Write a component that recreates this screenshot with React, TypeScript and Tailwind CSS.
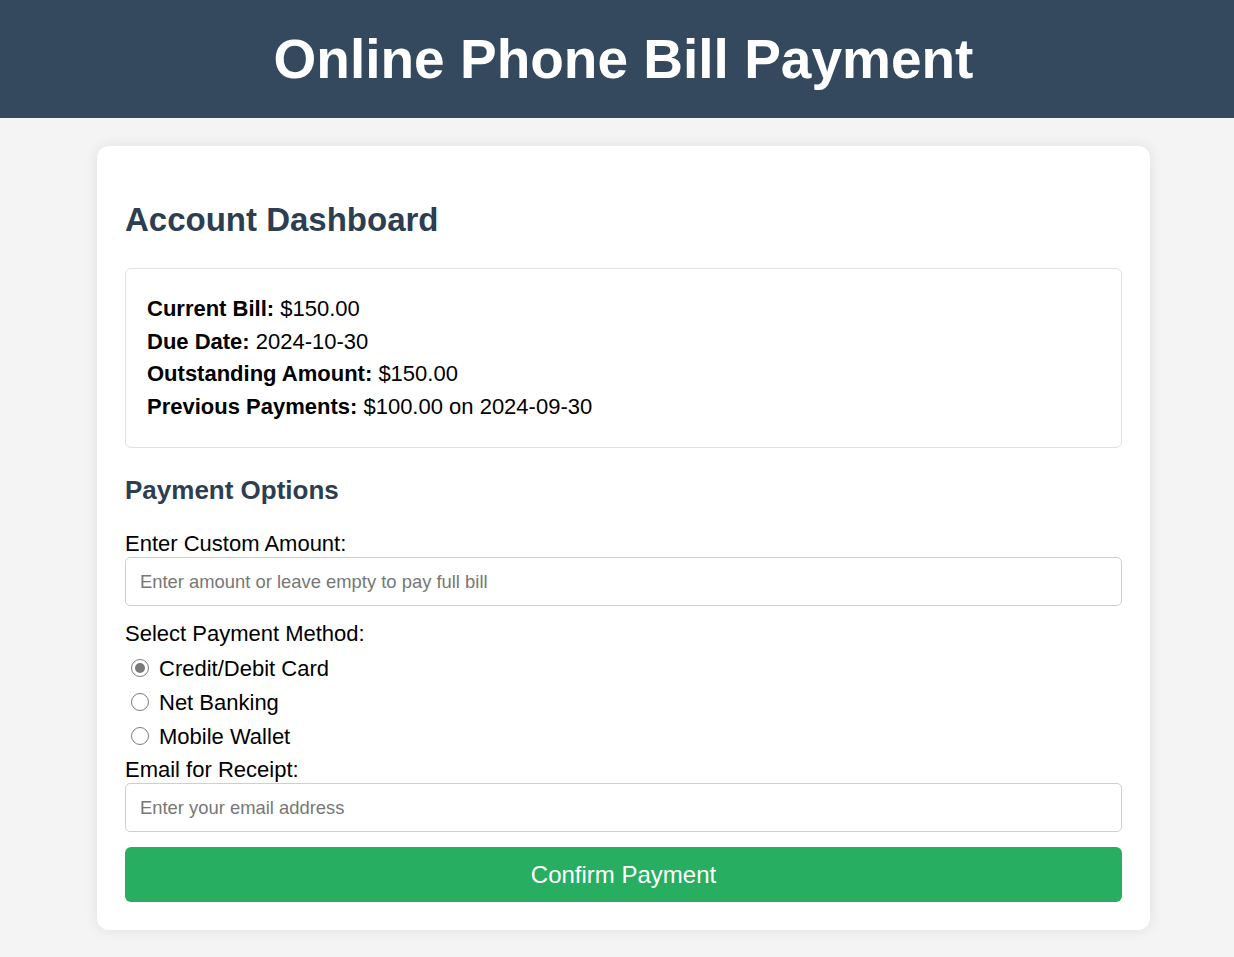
import React from "react";

const methods = ["Credit/Debit Card", "Net Banking", "Mobile Wallet"];

const Radio = ({ checked }: { checked: boolean }) => (
  <span className="flex h-[18px] w-[18px] items-center justify-center rounded-full border border-[#7d7d7d] bg-white">
    {checked && <span className="h-[10px] w-[10px] rounded-full bg-[#7a7a7a]" />}
  </span>
);

export default function App() {
  const [method, setMethod] = React.useState(0);

  return (
    <div className="min-h-[957px] bg-[#f4f4f4] font-['Liberation_Sans',Arial,sans-serif] text-black">
      {/* Header */}
      <header className="flex h-[118px] items-center justify-center bg-[#34495e] pl-[13px]">
        <h1 className="text-[55px] font-bold leading-none text-white">Online Phone Bill Payment</h1>
      </header>

      <div className="pl-[13px]">
        {/* Card */}
        <div className="mx-auto mt-[28px] w-[1053px] rounded-[12px] bg-white px-[28px] pt-[28px] pb-[28px] shadow-[0_0_14px_rgba(0,0,0,0.09)]">
          <h2 className="mt-[26px] text-[33px] font-bold leading-[40px] text-[#2c3e50]">Account Dashboard</h2>

          <div className="mt-[28px] rounded-[6px] border border-[#e2e2e2] px-[21px] py-[24px] text-[22px] leading-[32.5px]">
            <p><b>Current Bill:</b> $150.00</p>
            <p><b>Due Date:</b> 2024-10-30</p>
            <p><b>Outstanding Amount:</b> $150.00</p>
            <p><b>Previous Payments:</b> $100.00 on 2024-09-30</p>
          </div>

          <h3 className="mt-[27px] text-[26px] font-bold leading-[30px] text-[#2c3e50]">Payment Options</h3>

          <label className="mt-[26px] block text-[22px] leading-[26px]">Enter Custom Amount:</label>
          <input
            className="block h-[49px] w-full rounded-[5px] border border-[#cfcfcf] px-[14px] text-[18.4px] outline-none placeholder:text-[#777]"
            placeholder="Enter amount or leave empty to pay full bill"
          />

          <p className="mt-[15px] text-[22px] leading-[26px]">Select Payment Method:</p>
          <div className="mt-[4px] flex flex-col">
            {methods.map((m, i) => (
              <label
                key={m}
                onClick={() => setMethod(i)}
                className="flex h-[34px] cursor-pointer items-center gap-[10px] pl-[6px] text-[22px]"
              >
                <Radio checked={method === i} />
                <span>{m}</span>
              </label>
            ))}
          </div>

          <label className="mt-[4px] block text-[22px] leading-[26px]">Email for Receipt:</label>
          <input
            className="block h-[49px] w-full rounded-[5px] border border-[#cfcfcf] px-[14px] text-[18.4px] outline-none placeholder:text-[#777]"
            placeholder="Enter your email address"
          />

          <button className="mt-[15px] flex h-[55px] w-full items-center justify-center rounded-[6px] bg-[#27ae60] text-[24px] text-white">
            Confirm Payment
          </button>
        </div>
      </div>
    </div>
  );
}
